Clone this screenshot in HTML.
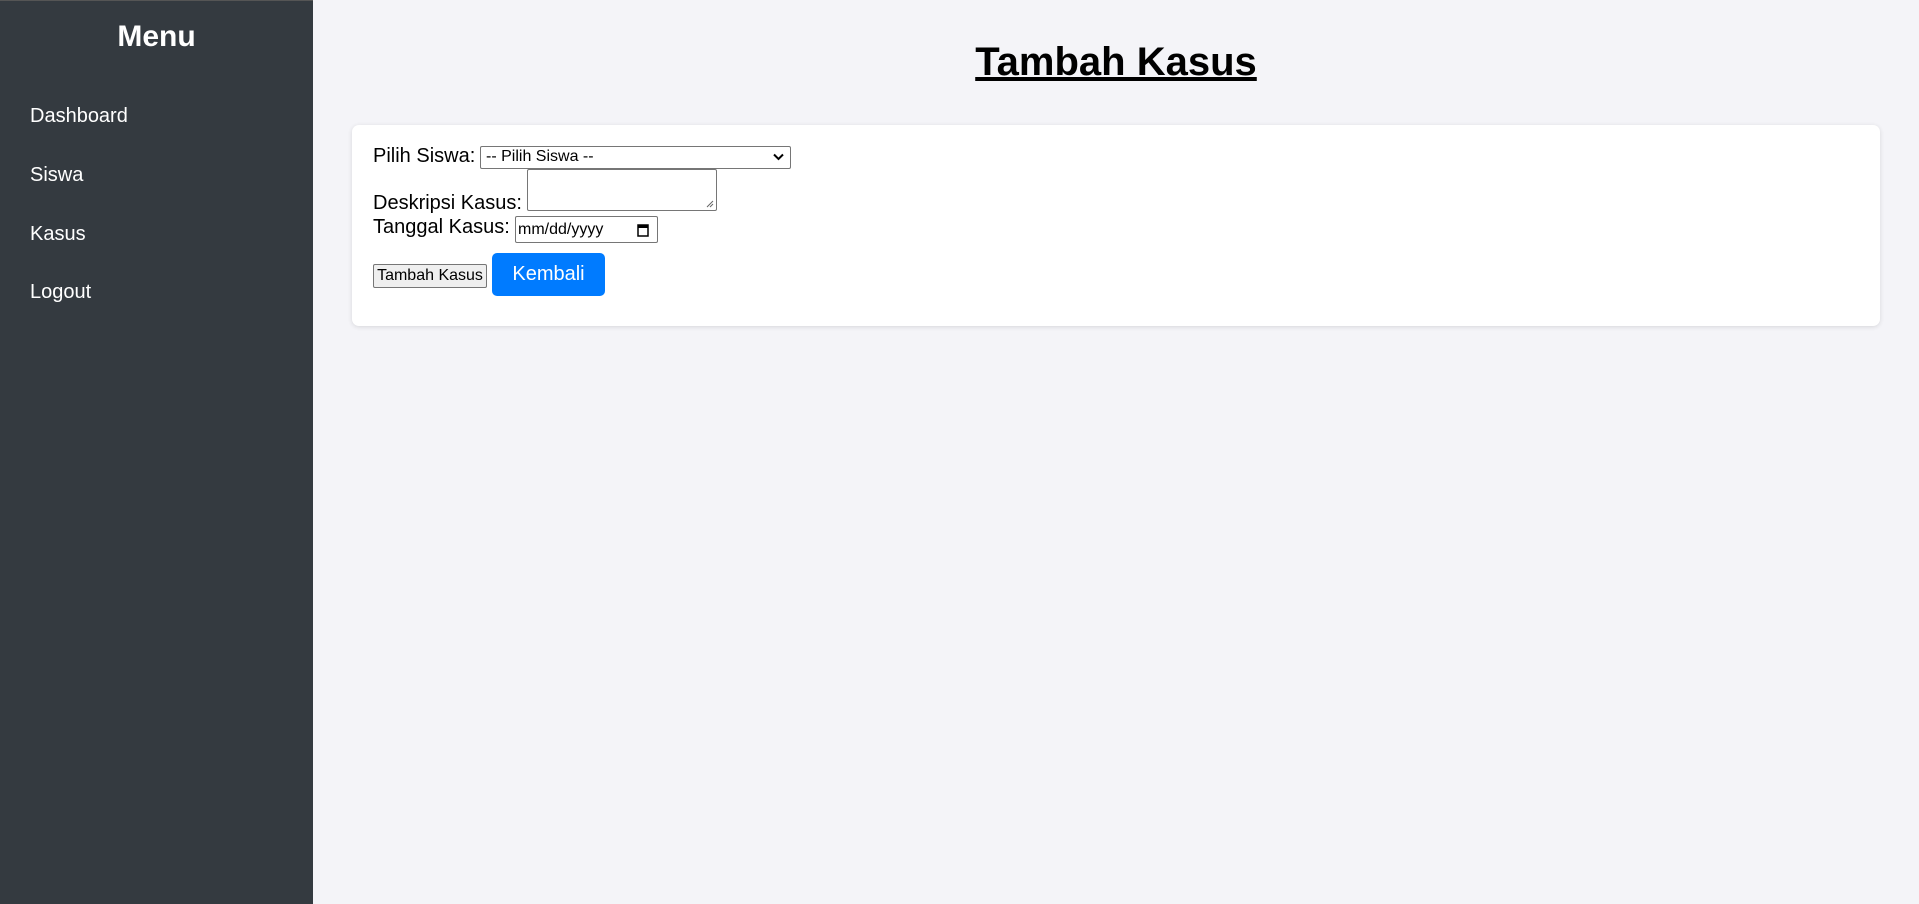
<!DOCTYPE html>
<html><head><meta charset="utf-8"><style>
*{box-sizing:border-box}
body{margin:0;width:1919px;height:904px;background:#f4f4f8;font-family:"Liberation Sans",Arial,sans-serif;position:relative;overflow:hidden}
.sb{position:absolute;left:0;top:0;width:313px;height:904px;background:#343a40;border-top:1px solid #555}
.sb h2{position:absolute;left:0;width:313px;top:18px;margin:0;text-align:center;color:#fff;font-size:30px;line-height:36px;font-weight:bold}
.sb a{position:absolute;left:30px;color:#fff;font-size:20px;line-height:24px;text-decoration:none}
h1{position:absolute;left:313px;width:1606px;top:38px;margin:0;text-align:center;font-size:40px;line-height:48px;text-decoration:underline;font-weight:bold;color:#000}
.card{position:absolute;left:352px;top:125px;width:1528px;height:201px;background:#fff;border-radius:7px;box-shadow:0 1px 5px rgba(0,0,0,.12)}
.t{position:absolute;font-size:20px;line-height:23px;color:#000;white-space:nowrap}
.b{position:absolute;border:1px solid #767676;background:#fff;border-radius:2px}
</style></head><body>
<div class="sb"><h2>Menu</h2>
<a style="top:103px">Dashboard</a><a style="top:162px">Siswa</a><a style="top:221px">Kasus</a><a style="top:279px">Logout</a></div>
<h1>Tambah Kasus</h1>
<div class="card"></div>
<div class="t" style="left:373px;top:145px">Pilih Siswa:</div>
<div class="b" style="left:480px;top:146px;width:311px;height:23px;font-size:16px;line-height:20px;padding-left:5px">-- Pilih Siswa --
<svg style="position:absolute;right:6px;top:6px" width="11" height="8" viewBox="0 0 11 8"><path d="M1 1.5l4.5 4.5 4.5-4.5" fill="none" stroke="#000" stroke-width="2"/></svg></div>
<div class="t" style="left:373px;top:192px">Deskripsi Kasus:</div>
<div class="b" style="left:527px;top:169px;width:190px;height:42px"><svg style="position:absolute;right:2px;bottom:2px" width="8" height="8"><path d="M7 1L1 7M7 4L4 7" stroke="#666"/></svg></div>
<div class="t" style="left:373px;top:216px">Tanggal Kasus:</div>
<div class="b" style="left:515px;top:216px;width:143px;height:27px;font-size:16px;line-height:25px;padding-left:2px">mm/dd/yyyy
<svg style="position:absolute;right:8px;top:6px" width="12" height="14" viewBox="0 0 12 14"><rect x="1" y="2" width="10" height="11" fill="none" stroke="#000" stroke-width="1.5"/><rect x="1" y="2" width="10" height="3" fill="#000"/></svg></div>
<div style="position:absolute;left:373px;top:264px;width:114px;height:24px;background:#efefef;border:1px solid #767676;border-radius:2px;font-size:16px;line-height:22px;text-align:center">Tambah Kasus</div>
<div style="position:absolute;left:492px;top:253px;width:113px;height:43px;background:#007bff;border-radius:5px;color:#fff;font-size:20px;line-height:43px;text-align:center">Kembali</div>
</body></html>
